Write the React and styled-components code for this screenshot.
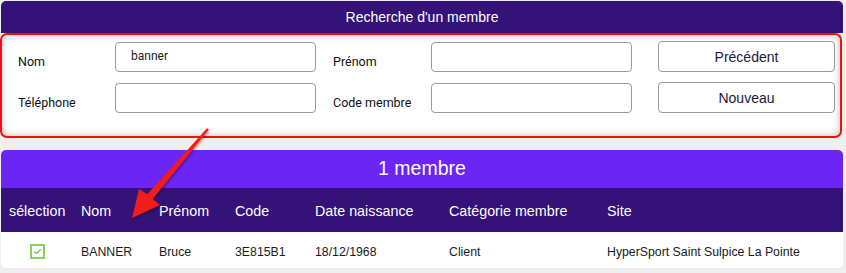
import React from "react";
import styled, { createGlobalStyle } from "styled-components";

const Global = createGlobalStyle`
  html, body { margin: 0; padding: 0; background: #efefef; }
  body { font-family: "Liberation Sans", Arial, sans-serif; }
  * { box-sizing: border-box; }
`;

const Page = styled.div`
  position: relative;
  width: 846px;
  height: 273px;
  padding: 1px 3px 0 1px;
  display: flex;
  flex-direction: column;
`;

const SearchHeader = styled.div`
  height: 32px;
  background: #341277;
  color: #ffffff;
  border-radius: 5px 5px 0 0;
  display: flex;
  align-items: center;
  justify-content: center;
  font-size: 14px;
`;

const SearchPanel = styled.div`
  margin-left: -1px;
  margin-right: 1px;
  border: 2px solid #f01010;
  border-radius: 7px;
  background: #ffffff;
  box-shadow: inset 0 0 7px rgba(0, 0, 0, 0.28);
  padding: 7px 6px 23px 16px;
  display: grid;
  grid-template-columns: 97px 201px 115px 201px 203px;
  grid-auto-rows: 30px;
  row-gap: 11px;
`;

const FieldLabel = styled.label`
  align-self: end;
  line-height: 20px;
  font-family: Roboto, "Liberation Sans", sans-serif;
  font-size: 12.5px;
  color: #111;
  margin-left: ${(p) => p.$indent || 0}px;
`;

const TextInput = styled.input`
  width: 201px;
  height: 30px;
  border: 1px solid #9a9a9a;
  border-radius: 4px;
  padding: 0 0 3px 15px;
  font-family: Roboto, "Liberation Sans", sans-serif;
  font-size: 12px;
  color: #222;
  background: #fff;
  outline: none;
`;

const ActionButton = styled.button`
  margin-left: 26px;
  margin-top: -1px;
  width: 177px;
  height: 31px;
  border: 1px solid #9a9a9a;
  border-radius: 4px;
  background: #ffffff;
  font-family: "Liberation Sans", Arial, sans-serif;
  font-size: 14px;
  color: #1a1a3a;
  padding: 0;
`;

const ResultsPanel = styled.div`
  margin-top: 12px;
  background: #ffffff;
  border-radius: 5px;
  overflow: hidden;
`;

const ResultsTitle = styled.div`
  height: 38px;
  background: #6b25f4;
  color: #fff;
  font-size: 19.5px;
  display: flex;
  align-items: center;
  justify-content: center;
  padding-bottom: 1px;
`;

const cols = "72px 78px 76px 80px 134px 158px 1fr";

const HeaderRow = styled.div`
  height: 44px;
  background: #341277;
  display: grid;
  grid-template-columns: ${cols};
  align-items: center;
  padding-top: 1px;
`;

const HeadCell = styled.div`
  color: #fff;
  font-size: 14.3px;
  padding-left: 8px;
`;

const DataRow = styled.div`
  height: 36px;
  display: grid;
  grid-template-columns: ${cols};
  align-items: center;
  padding-top: 3px;
`;

const Cell = styled.div`
  font-size: 12.3px;
  color: #1a1a1a;
  padding-left: 8px;
  display: flex;
  justify-content: ${(p) => (p.$center ? "center" : "flex-start")};
  padding-right: ${(p) => (p.$center ? "8px" : "0")};
`;

const Arrow = styled.svg`
  position: absolute;
  left: 0;
  top: 0;
  pointer-events: none;
`;

const Check = () => (
  <svg width="15" height="15" viewBox="0 0 15 15">
    <rect x="1" y="1" width="13" height="13" fill="#fff" stroke="#8fd05c" strokeWidth="2" />
    <path d="M4.3 7.6 L6.5 9.6 L10.8 5.3" fill="none" stroke="#7cc448" strokeWidth="1.3" />
  </svg>
);

const headers = ["sélection", "Nom", "Prénom", "Code", "Date naissance", "Catégorie membre", "Site"];

export default function App() {
  return (
    <>
      <Global />
      <Page>
        <SearchHeader>Recherche d'un membre</SearchHeader>
        <SearchPanel>
          <FieldLabel>Nom</FieldLabel>
          <TextInput defaultValue="banner" />
          <FieldLabel $indent={17}>Prénom</FieldLabel>
          <TextInput />
          <ActionButton>Précédent</ActionButton>
          <FieldLabel>Téléphone</FieldLabel>
          <TextInput />
          <FieldLabel $indent={17}>Code membre</FieldLabel>
          <TextInput />
          <ActionButton>Nouveau</ActionButton>
        </SearchPanel>
        <ResultsPanel>
          <ResultsTitle>1 membre</ResultsTitle>
          <HeaderRow>
            {headers.map((h) => (
              <HeadCell key={h}>{h}</HeadCell>
            ))}
          </HeaderRow>
          <DataRow>
            <Cell $center>
              <Check />
            </Cell>
            <Cell>BANNER</Cell>
            <Cell>Bruce</Cell>
            <Cell>3E815B1</Cell>
            <Cell>18/12/1968</Cell>
            <Cell>Client</Cell>
            <Cell>HyperSport Saint Sulpice La Pointe</Cell>
          </DataRow>
        </ResultsPanel>
        <Arrow width="846" height="273" viewBox="0 0 846 273">
          <defs>
            <filter id="sh" x="-20%" y="-20%" width="140%" height="140%">
              <feDropShadow dx="1" dy="1.5" stdDeviation="1.2" floodColor="#000" floodOpacity="0.35" />
            </filter>
          </defs>
          <polygon
            filter="url(#sh)"
            fill="#f21a1a"
            points="208.9,129.6 207.1,128.2 147.3,194.3 139,189 132,218 160,205 152.7,198.9"
          />
        </Arrow>
      </Page>
    </>
  );
}
